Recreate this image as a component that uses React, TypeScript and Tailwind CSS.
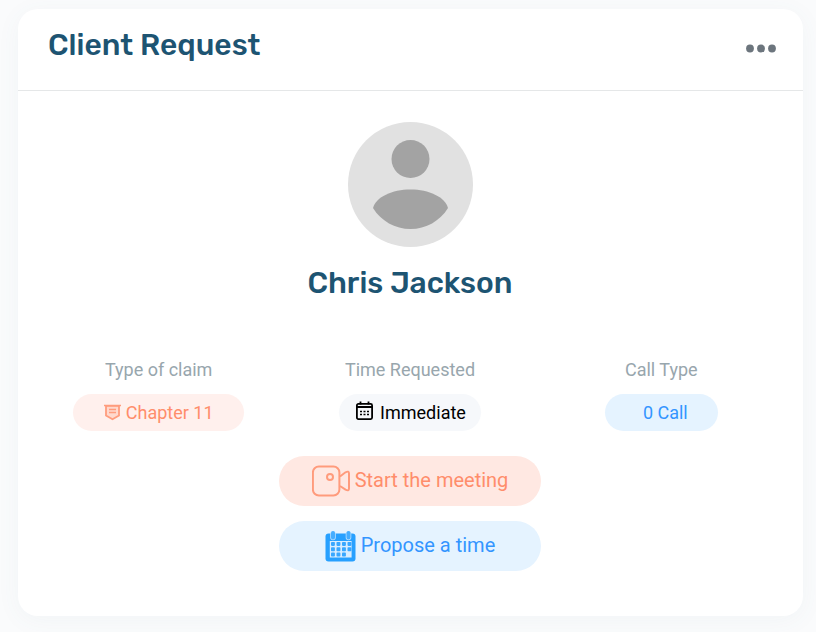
import type { ReactNode } from "react";

function ShieldIcon() {
  return (
    <svg className="mr-[5px] h-[17px] w-[17px] shrink-0" viewBox="0 0 17 17" fill="none">
      <path d="M2 1.800h13v9.700L8.500 15.200 2 11.500z" fill="#ffd9ce" stroke="#ff9c7d" strokeWidth="1.800" />
      <path d="M0 1.500h17M5 5.500h7M5 8.500h7" stroke="#ff9c7d" strokeWidth="1.400" />
    </svg>
  );
}

function MonthIcon() {
  return (
    <svg className="mr-[6px] -mt-[5px] h-[19px] w-[18px] shrink-0" viewBox="0 0 18 19" fill="none" stroke="#000">
      <rect x="0.900" y="2.900" width="15.200" height="15.200" rx="1.500" strokeWidth="1.800" />
      <path d="M4.500 0.500v3M12.500 0.500v3M1 6h15" strokeWidth="1.800" />
      <path d="M4 10.500h2M7.500 10.500h2M11 10.500h2M4 13.500h2M7.500 13.500h2M11 13.500h2" strokeWidth="1.600" />
    </svg>
  );
}

function CameraIcon() {
  return (
    <svg className="mr-[4px] h-8 w-[39px] shrink-0" viewBox="0 0 39 32" fill="none" stroke="#ff9b7c" strokeWidth="2">
      <rect x="0.900" y="1.500" width="26.500" height="29" rx="6" />
      <circle cx="18" cy="12" r="3" />
      <path d="M28 11.500 33.500 7.300Q37 5.500 37 8.500v15Q37 26.500 33.500 24.700L28 21" />
    </svg>
  );
}

function CalendarIcon() {
  const cells = [
    [6, 11], [11.5, 11], [17, 11], [22.5, 11],
    [6, 16.3], [11.5, 16.3], [17, 16.3], [22.5, 16.3],
    [6, 21.6], [11.5, 21.6], [17, 21.6],
  ];
  return (
    <svg className="mt-px mr-[5px] h-[31px] w-[31px] shrink-0" viewBox="0 0 31 31">
      <rect x="0.500" y="2.500" width="30" height="28" rx="3" fill="#27a0ff" />
      <rect x="4.800" y="10" width="21.800" height="16.500" fill="#d8edff" />
      <path d="M8 3v3.500M23.500 3v3.500" stroke="#b9dfff" strokeWidth="5.600" strokeLinecap="round" />
      <path d="M8 2v4.500M23.500 2v4.500" stroke="#45adff" strokeWidth="4" strokeLinecap="round" />
      {cells.map(([x, y]) => (
        <rect key={`${x}-${y}`} x={x} y={y} width="3.900" height="3.900" rx="0.800" fill="#38a7ff" />
      ))}
    </svg>
  );
}

function Detail({ label, children }: { label: string; children: ReactNode }) {
  return (
    <div className="flex flex-col items-center">
      <div className="mb-[11px] text-[18px] leading-[27px] text-[#98a6ad]">{label}</div>
      {children}
    </div>
  );
}

export default function App() {
  return (
    <div className="h-[632px] w-[816px] overflow-hidden bg-[#fafbfc] pt-[9px] pl-[18px] font-['Roboto',sans-serif]">
      <section className="h-[607px] w-[785px] rounded-[20px] bg-white shadow-[0_4px_25px_rgba(80,110,140,0.05)]">
        <header className="flex h-[82px] justify-between border-b border-[#e5e7e8] pr-[27px] pl-[30px]">
          <h1 className="pt-[15px] font-['Rubik','Roboto',sans-serif] text-[30px] leading-[42px] font-medium text-[#1d5472]">Client Request</h1>
          <button aria-label="Options" className="mt-[35px] h-[9px] w-[30px]">
            <svg className="block h-[9px] w-[30px]" viewBox="0 0 30 9" fill="#6c757d">
              <circle cx="4" cy="4.500" r="3.900" />
              <circle cx="15" cy="4.500" r="3.900" />
              <circle cx="26" cy="4.500" r="3.900" />
            </svg>
          </button>
        </header>

        <div className="flex flex-col items-center pt-[31px] pr-4 pl-[15px]">
          <svg className="ml-px h-[125px] w-[125px]" viewBox="0 0 125 125">
            <circle cx="62.500" cy="62.500" r="62.500" fill="#e1e1e1" />
            <circle cx="62.500" cy="37" r="19" fill="#a3a3a3" />
            <path d="M25 86C28 75 44 67.500 62.500 67.500S97 75 100 86C92 99 78 107 62.500 107S33 99 25 86z" fill="#a3a3a3" />
          </svg>
          <h2 className="mt-[15px] font-['Rubik','Roboto',sans-serif] text-[30px] leading-[42px] font-medium text-[#1d5472]">Chris Jackson</h2>

          <div className="mt-[52px] grid w-full grid-cols-3">
            <Detail label="Type of claim">
              <div className="flex h-[37px] w-[171px] items-center justify-center rounded-full bg-[#fff0ed] text-[18px] text-[#ff8d6b]">
                <ShieldIcon />
                Chapter 11
              </div>
            </Detail>
            <Detail label="Time Requested">
              <div className="flex h-[37px] w-[142px] items-center justify-center rounded-full bg-[#f6f8fb] pl-0.5 text-[18px] text-black">
                <MonthIcon />
                Immediate
              </div>
            </Detail>
            <Detail label="Call Type">
              <div className="flex h-[37px] w-[113px] items-center justify-center rounded-full bg-[#e5f3ff] pb-px pl-2 text-[18px] text-[#3395ff]">0 Call</div>
            </Detail>
          </div>

          <button className="mt-[25px] flex h-[50px] w-[262px] items-center justify-center rounded-full bg-[#ffe8e2] text-[20px] text-[#ff8d6b]">
            <CameraIcon />
            <span className="pb-[3px]">Start the meeting</span>
          </button>
          <button className="mt-[15px] flex h-[50px] w-[262px] items-center justify-center rounded-full bg-[#e5f3ff] text-[20px] text-[#3395ff]">
            <CalendarIcon />
            <span className="pb-[3px]">Propose a time</span>
          </button>
        </div>
      </section>
    </div>
  );
}
